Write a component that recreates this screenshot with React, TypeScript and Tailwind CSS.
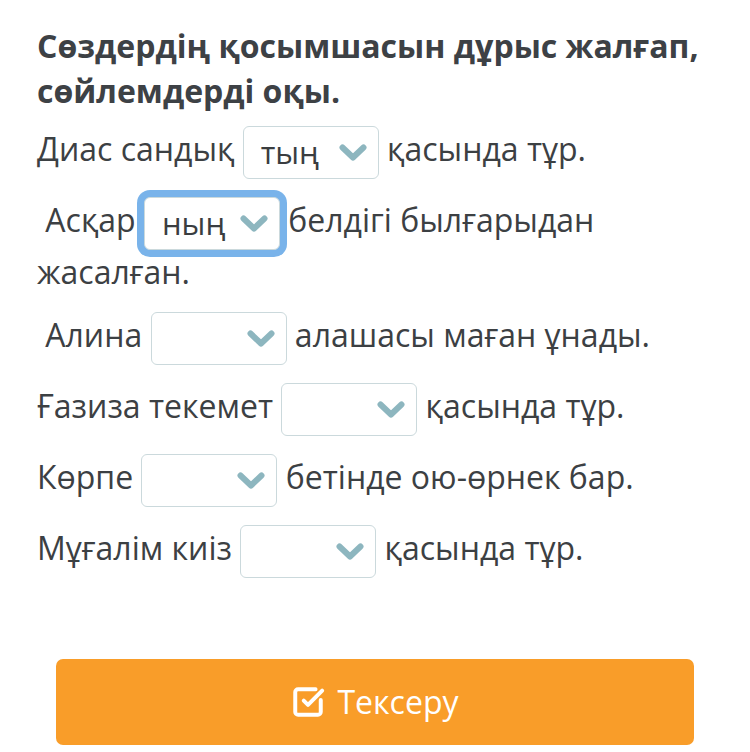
import { SquareCheckBig } from 'lucide-react'

function Chevron() {
  return (
    <svg viewBox="0 0 28 18" className="h-[18px] w-[28px] shrink-0" fill="none">
      <polyline points="3.5,3.5 14,13.5 24.5,3.5" stroke="#8db6bf" strokeWidth="6" strokeLinecap="round" strokeLinejoin="round" />
    </svg>
  )
}

function Select({ value, focused }: { value?: string; focused?: boolean }) {
  return (
    <span
      className={
        'inline-flex h-[53px] w-[136px] items-center justify-between rounded-[6px] border border-[#cbd9dc] bg-white pl-[17px] pr-[11px] align-middle ' +
        (focused ? 'shadow-[0_0_0_7px_#79b3ea]' : '')
      }
    >
      <span className="text-[31px] leading-none text-[#3a3d40]">{value ?? ''}</span>
      <Chevron />
    </span>
  )
}

type Part = string | { value?: string; focused?: boolean }

const sentences: Part[][] = [
  ['Диас сандық ', { value: 'тың' }, ' қасында тұр.'],
  ['\u00a0Асқар ', { value: 'ның', focused: true }, ' белдігі былғарыдан жасалған.'],
  ['\u00a0Алина ', {}, ' алашасы маған ұнады.'],
  ['Ғазиза текемет ', {}, ' қасында тұр.'],
  ['Көрпе ', {}, ' бетінде ою-өрнек бар.'],
  ['Мұғалім киіз ', {}, ' қасында тұр.'],
]

export default function App() {
  return (
    <div className="min-h-[752px] bg-white font-['Open_Sans',sans-serif] text-[#3c4043]">
      <div className="px-[37px] pt-[23px]">
        <h1 className="text-[32px] font-bold leading-[45px] text-[#3d4145]">
          Сөздердің қосымшасын дұрыс жалғап, сөйлемдерді оқы.
        </h1>
        <div className="mt-[13px]">
          {sentences.map((parts, i) => (
            <p key={i} className="mb-[18px] text-[32px] leading-[44px]">
              {parts.map((p, j) =>
                typeof p === 'string' ? (
                  <span key={j}>{p}</span>
                ) : (
                  <Select key={j} value={p.value} focused={p.focused} />
                ),
              )}
            </p>
          ))}
        </div>
      </div>
      <div className="mx-[56px] mt-[81px]">
        <button className="flex h-[86px] w-full items-center justify-center gap-[12px] rounded-[7px] bg-[#f99d29] text-[32px] text-white">
          <SquareCheckBig size={34} strokeWidth={2.8} />
          <span>Тексеру</span>
        </button>
      </div>
    </div>
  )
}
